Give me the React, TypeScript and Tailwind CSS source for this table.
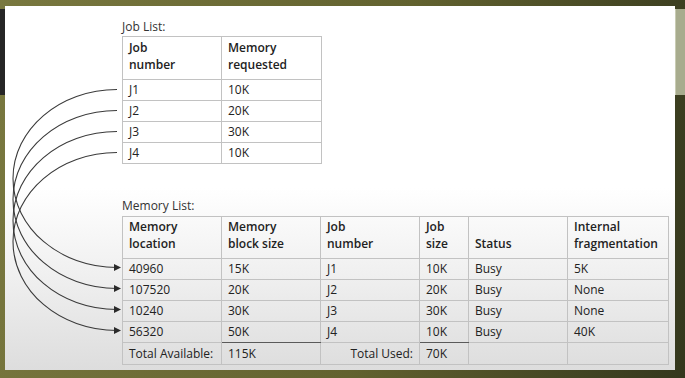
import React from "react";

const jobRows = [
  ["J1", "10K"],
  ["J2", "20K"],
  ["J3", "30K"],
  ["J4", "10K"],
];

const memRows = [
  ["40960", "15K", "J1", "10K", "Busy", "5K"],
  ["107520", "20K", "J2", "20K", "Busy", "None"],
  ["10240", "30K", "J3", "30K", "Busy", "None"],
  ["56320", "50K", "J4", "10K", "Busy", "40K"],
];

const cell = "border border-[#c2c2c2] px-[6px] py-0 text-left align-middle";
const head = "border border-[#c2c2c2] px-[6px] pt-0 pb-[6px] text-left align-bottom font-semibold leading-[17px] text-[12px]";

function Arrows() {
  const starts = [83.5, 104.5, 125.5, 146.5];
  const offs = 178;
  return (
    <svg
      className="absolute left-0 top-0 pointer-events-none"
      width="670"
      height="364"
      viewBox="0 0 670 364"
    >
      {starts.map((y0, i) => {
        const y1 = y0 + offs;
        const mid = y0 + offs / 2;
        const rx = 104;
        const ry = offs / 2;
        const k = 0.5523;
        const x0 = 112;
        const xl = x0 - rx;
        const d = `M${x0} ${y0} C ${x0 - k * rx} ${y0} ${xl} ${mid - k * ry} ${xl} ${mid} C ${xl} ${mid + k * ry} ${x0 - k * rx} ${y1} ${x0} ${y1} L 110 ${y1}`;
        return (
          <g key={i}>
            <path d={d} fill="none" stroke="#3a3a3a" strokeWidth="1.1" />
            <polygon
              points={`109,${y1 - 3.5} 116,${y1} 109,${y1 + 3.5}`}
              fill="#2a2a2a"
            />
          </g>
        );
      })}
    </svg>
  );
}

export default function App() {
  return (
    <div className="w-[685px] h-[378px] overflow-hidden flex flex-col bg-[linear-gradient(100deg,#79783f,#62622f_55%,#34371d)] font-['Open_Sans',sans-serif] text-[#222]">
      <div className="h-[6px] shrink-0" />
      <div className="flex flex-row">
        <div className="w-[5px] shrink-0">
          <div className="mt-[3px] h-[86px] bg-[#262626]" />
        </div>
        <div className="relative w-[670px] h-[364px] shrink-0 bg-[linear-gradient(180deg,#ffffff_0%,#ffffff_50%,#efefef_75%,#dddddd_100%)]">
          <div className="pl-[117px] pt-[10px] text-[12px]">
            <div className="h-[20px] leading-[21px] text-[#333]">Job List:</div>
            <table className="border-collapse table-fixed w-[199px]">
              <colgroup>
                <col className="w-[99px]" />
                <col className="w-[100px]" />
              </colgroup>
              <thead>
                <tr className="h-[43px]">
                  <th className={head}>
                    Job
                    <br />
                    number
                  </th>
                  <th className={head}>
                    Memory
                    <br />
                    requested
                  </th>
                </tr>
              </thead>
              <tbody>
                {jobRows.map((r) => (
                  <tr key={r[0]} className="h-[21px]">
                    <td className={cell}>{r[0]}</td>
                    <td className={cell}>{r[1]}</td>
                  </tr>
                ))}
              </tbody>
            </table>
            <div className="mt-[32px] h-[20px] leading-[20px] text-[#333]">Memory List:</div>
            <table className="border-collapse table-fixed w-[546px]">
              <colgroup>
                <col className="w-[99px]" />
                <col className="w-[99px]" />
                <col className="w-[99px]" />
                <col className="w-[49px]" />
                <col className="w-[99px]" />
                <col className="w-[101px]" />
              </colgroup>
              <thead>
                <tr className="h-[42px]">
                  <th className={head}>
                    Memory
                    <br />
                    location
                  </th>
                  <th className={head}>
                    Memory
                    <br />
                    block size
                  </th>
                  <th className={head}>
                    Job
                    <br />
                    number
                  </th>
                  <th className={head}>
                    Job
                    <br />
                    size
                  </th>
                  <th className={head}>Status</th>
                  <th className={head + " whitespace-nowrap"}>
                    Internal
                    <br />
                    fragmentation
                  </th>
                </tr>
              </thead>
              <tbody>
                {memRows.map((r, i) => (
                  <tr key={r[0]} className="h-[21px]">
                    {r.map((c, j) => (
                      <td
                        key={j}
                        className={
                          cell +
                          (i === 3 && (j === 1 || j === 3)
                            ? " border-b-[#5a5a5a]"
                            : "")
                        }
                      >
                        {c}
                      </td>
                    ))}
                  </tr>
                ))}
                <tr className="h-[22px]">
                  <td className={cell + " whitespace-nowrap"}>Total Available:</td>
                  <td className={cell}>115K</td>
                  <td className={cell + " text-right"}>Total Used:</td>
                  <td className={cell}>70K</td>
                  <td className={cell}></td>
                  <td className={cell}></td>
                </tr>
              </tbody>
            </table>
          </div>
          <Arrows />
        </div>
        <div className="w-[10px] shrink-0">
          <div className="mt-[3px] h-[86px] bg-[#a8ac8e] border-l border-[#c9ccb4]" />
        </div>
      </div>
    </div>
  );
}
